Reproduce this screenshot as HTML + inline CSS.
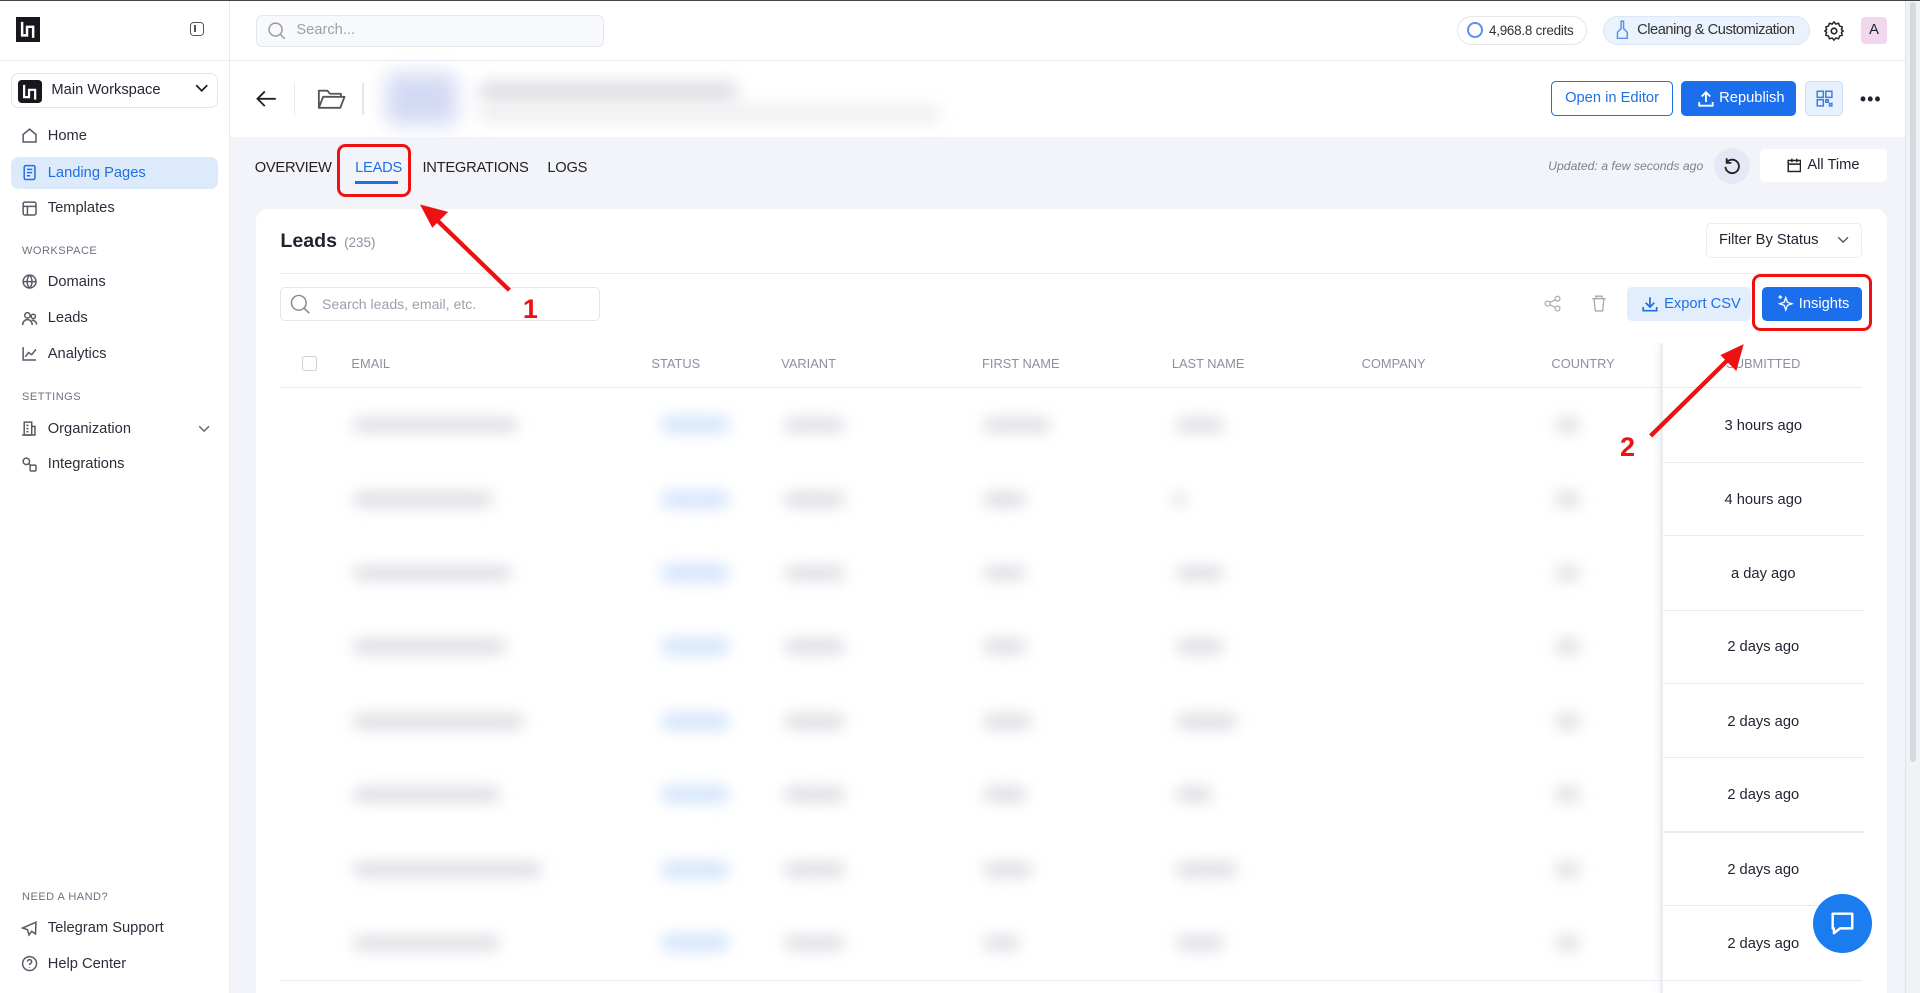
<!DOCTYPE html>
<html><head><meta charset="utf-8">
<style>
html,body{margin:0;padding:0;}
html{width:1920px;height:993px;overflow:hidden;background:#fff;}
body{zoom:1.22449;width:1568px;height:811px;position:relative;overflow:hidden;font-family:"Liberation Sans",sans-serif;color:#1f2330;background:#fff;}
.a{position:absolute;}
.nav{position:absolute;left:17px;font-size:12px;color:#2a2f3b;display:flex;align-items:center;gap:8px;}
.nav svg{width:14px;height:14px;stroke:#555b66;fill:none;stroke-width:1.4;}
.lbl{position:absolute;left:18px;font-size:9px;color:#6b7280;letter-spacing:.4px;}
.th{position:absolute;top:291px;font-size:10.5px;color:#8a90a0;}
.bl{position:absolute;height:12px;border-radius:6px;background:#dcdde2;filter:blur(6px);}
.bb{position:absolute;height:14px;border-radius:6px;background:#d3e4fb;filter:blur(6px);}
.tm{position:absolute;left:1358px;width:164px;text-align:center;font-size:12px;color:#1f2330;}
.rl{position:absolute;left:1358px;width:164px;height:1px;background:#e8eaf1;}
.tab{position:absolute;top:131px;font-size:12px;color:#222;letter-spacing:-.2px}
</style></head><body>
<div class="a" style="left:0;top:0;width:1568px;height:1px;background:#444"></div>
<div class="a" style="left:0;top:1px;width:187px;height:810px;border-right:1px solid #e8eaf2;background:#fff"></div>
<div class="a" style="left:13px;top:14px;width:20px;height:20px;background:#16181d"><svg width="20" height="20"><path d="M5 4v11h4v-7h5v9" stroke="#fff" stroke-width="2" fill="none"/></svg></div>
<div class="a" style="left:155px;top:18px;width:12px;height:11px;border:1.3px solid #555;border-radius:3px;box-sizing:border-box"><div style="position:absolute;left:3px;top:2px;width:1.3px;height:5px;background:#555"></div></div>
<div class="a" style="left:0;top:49px;width:187px;height:1px;background:#eceef4"></div>
<div class="a" style="left:9px;top:60px;width:169px;height:28px;border:1px solid #e3e5ee;border-radius:6px;box-sizing:border-box"></div>
<div class="a" style="left:15px;top:65px;width:19px;height:19px;background:#16181d;border-radius:3px"><svg width="19" height="19"><path d="M5 4v10h4v-6h5v8" stroke="#fff" stroke-width="1.8" fill="none"/></svg></div>
<div class="a" style="left:42px;top:67px;font-size:12px">Main Workspace</div>
<svg class="a" style="left:159px;top:69px" width="11" height="8"><path d="M1 1l4.5 4.5L10 1" stroke="#222" stroke-width="1.5" fill="none"/></svg>
<div class="nav" style="top:104px"><svg viewBox="0 0 16 16"><path d="M2 7l6-5 6 5v7H2z"/></svg>Home</div>
<div class="a" style="left:9px;top:128px;width:169px;height:26px;background:#ddeafb;border-radius:6px"></div>
<div class="nav" style="top:134px;color:#1f6fe5"><svg viewBox="0 0 16 16" style="stroke:#1f6fe5"><rect x="3" y="1.5" width="10" height="13" rx="1.5"/><path d="M5.5 5h5M5.5 8h5M5.5 11h3"/></svg>Landing Pages</div>
<div class="nav" style="top:163px"><svg viewBox="0 0 16 16"><rect x="2" y="2" width="12" height="12" rx="1.5"/><path d="M2 6h12M6 6v8"/></svg>Templates</div>
<div class="lbl" style="top:200px">WORKSPACE</div>
<div class="nav" style="top:223px"><svg viewBox="0 0 16 16"><circle cx="8" cy="8" r="6"/><path d="M2 8h12M8 2c3 3 3 9 0 12M8 2c-3 3-3 9 0 12"/></svg>Domains</div>
<div class="nav" style="top:253px"><svg viewBox="0 0 16 16"><circle cx="6" cy="5" r="2.5"/><circle cx="11.5" cy="6" r="2"/><path d="M1.5 14c0-3 2-5 4.5-5s4.5 2 4.5 5M10 9.5c2.5 0 4.5 1.5 4.5 4"/></svg>Leads</div>
<div class="nav" style="top:282px"><svg viewBox="0 0 16 16"><path d="M2 2v12h12M4 11l3-4 3 2 4-5"/></svg>Analytics</div>
<div class="lbl" style="top:319px">SETTINGS</div>
<div class="nav" style="top:343px"><svg viewBox="0 0 16 16"><rect x="3" y="2" width="7" height="12"/><path d="M10 6h3v8H1M5 5h2M5 8h2M5 11h2"/></svg>Organization</div>
<svg class="a" style="left:162px;top:347px" width="10" height="7"><path d="M1 1l4 4 4-4" stroke="#666" stroke-width="1.2" fill="none"/></svg>
<div class="nav" style="top:372px"><svg viewBox="0 0 16 16"><circle cx="5" cy="5" r="3"/><rect x="8.5" y="8.5" width="5.5" height="5.5" rx="1"/><path d="M7 7l2 2"/></svg>Integrations</div>
<div class="lbl" style="top:728px">NEED A HAND?</div>
<div class="nav" style="top:751px"><svg viewBox="0 0 16 16"><path d="M14 2L1.5 7.5l4.5 1.5 1.5 5 2.5-3.5 3.5 2.5z"/></svg>Telegram Support</div>
<div class="nav" style="top:780px"><svg viewBox="0 0 16 16"><circle cx="8" cy="8" r="6.5"/><path d="M6 6.3a2 2 0 114 0c0 1.3-2 1.5-2 3M8 11.5v.5"/></svg>Help Center</div>
<div class="a" style="left:188px;top:49px;width:1368px;height:1px;background:#eceef4"></div>
<div class="a" style="left:209px;top:12px;width:284px;height:26px;border:1px solid #e4e6ef;background:#f8f9fc;border-radius:5px;box-sizing:border-box"></div>
<svg class="a" style="left:218px;top:17px" width="16" height="16"><circle cx="7" cy="7" r="5.3" stroke="#999" stroke-width="1.2" fill="none"/><path d="M11 11l3.5 3.5" stroke="#999" stroke-width="1.2"/></svg>
<div class="a" style="left:242px;top:18px;font-size:12px;color:#9aa0ad">Search...</div>
<div class="a" style="left:1190px;top:13px;width:106px;height:24px;border:1px solid #e4e6ef;border-radius:12px;box-sizing:border-box"></div>
<div class="a" style="left:1198px;top:18px;width:13px;height:13px;border:2px solid #5a8ff0;border-radius:50%;box-sizing:border-box"></div>
<div class="a" style="left:1216px;top:19px;font-size:11px;color:#333;letter-spacing:-.2px">4,968.8 credits</div>
<div class="a" style="left:1309px;top:13px;width:169px;height:24px;background:#e9f2fd;border:1px solid #dbe7f8;border-radius:12px;box-sizing:border-box"></div>
<svg class="a" style="left:1319px;top:16px" width="12" height="16"><path d="M5 1h2v6l3 3v5H2v-5l3-3z" stroke="#5a8ff0" stroke-width="1.2" fill="none"/></svg>
<div class="a" style="left:1337px;top:18px;font-size:12px;color:#333;letter-spacing:-.4px">Cleaning &amp; Customization</div>
<svg class="a" style="left:1489px;top:16px" width="18" height="18" viewBox="0 0 24 24"><circle cx="12" cy="12" r="3" fill="none" stroke="#222" stroke-width="1.8"/><path d="M12 2l2 2.5 3-1 1 3 3 1-1 3L22 12l-2 1.5 1 3-3 1-1 3-3-1L12 22l-2-2.5-3 1-1-3-3-1 1-3L2 12l2-1.5-1-3 3-1 1-3 3 1z" fill="none" stroke="#222" stroke-width="1.6" stroke-linejoin="round"/></svg>
<div class="a" style="left:1520px;top:14px;width:21px;height:22px;background:#f1d8ef;border-radius:3px;font-size:12px;text-align:center;line-height:22px">A</div>
<svg class="a" style="left:208px;top:73px" width="18" height="16"><path d="M17 8H2M8 2L2 8l6 6" stroke="#222" stroke-width="1.5" fill="none"/></svg>
<div class="a" style="left:240px;top:68px;width:1px;height:26px;background:#e5e7ee"></div>
<svg class="a" style="left:259px;top:71px" width="24" height="20"><path d="M1.5 17V3h7l2 2.5h9V8M1.5 17l3.5-9h17.5l-3.5 9z" stroke="#555" stroke-width="1.5" fill="none" stroke-linejoin="round"/></svg>
<div class="a" style="left:296px;top:68px;width:1px;height:26px;background:#e5e7ee"></div>
<div class="a" style="left:315px;top:60px;width:58px;height:42px;background:#d4daf3;filter:blur(8px);border-radius:6px"></div>
<div class="a" style="left:392px;top:68px;width:210px;height:14px;background:#d8d9de;filter:blur(7px)"></div>
<div class="a" style="left:392px;top:88px;width:375px;height:10px;background:#e6e7ea;filter:blur(7px)"></div>
<div class="a" style="left:1267px;top:66px;width:99px;height:29px;border:1px solid #1f6fe5;border-radius:4px;box-sizing:border-box;font-size:12px;color:#1f6fe5;text-align:center;line-height:27px">Open in Editor</div>
<div class="a" style="left:1373px;top:66px;width:94px;height:29px;background:#1c6fec;border-radius:4px;font-size:12px;color:#fff;line-height:29px"><svg style="position:absolute;left:14px;top:8px" width="13" height="13"><path d="M6.5 9V1M3 4.5L6.5 1 10 4.5M1 9v3h11V9" stroke="#fff" stroke-width="1.5" fill="none"/></svg><span style="position:absolute;left:31px">Republish</span></div>
<div class="a" style="left:1474px;top:66px;width:31px;height:29px;background:#e7f0fd;border:1px solid #cfe0f8;border-radius:4px;box-sizing:border-box"><svg style="position:absolute;left:8px;top:7px" width="14" height="14"><path d="M1 1h5v5H1zM8 1h5v5H8zM1 8h5v5H1zM8 8h2v2H8zM11 11h2v2h-2z" stroke="#3b7de8" stroke-width="1.2" fill="none"/></svg></div>
<div class="a" style="left:1519px;top:73px;font-size:14px;font-weight:bold;letter-spacing:1px">•••</div>
<div class="a" style="left:188px;top:112px;width:1368px;height:699px;background:#f3f4f9"></div>
<div class="a" style="left:1556px;top:1px;width:12px;height:810px;background:#f1f2f5;border-left:1px solid #e2e4ea"></div>
<div class="a" style="left:1560px;top:2px;width:5px;height:620px;background:#d5d8de;border-radius:3px"></div>
<div class="tab" style="left:208px">OVERVIEW</div>
<div class="tab" style="left:290px;color:#1f6fe5">LEADS</div>
<div class="a" style="left:290px;top:148px;width:35px;height:2px;background:#1f6fe5"></div>
<div class="tab" style="left:345px">INTEGRATIONS</div>
<div class="tab" style="left:447px">LOGS</div>
<div class="a" style="left:1200px;top:130px;width:191px;text-align:right;font-size:10px;font-style:italic;color:#7b8190">Updated: a few seconds ago</div>
<div class="a" style="left:1400px;top:121px;width:29px;height:29px;background:#e6e8f5;border-radius:50%"><svg style="position:absolute;left:7px;top:7px" width="15" height="15"><path d="M3 4.5A5.5 5.5 0 1 1 2 8M3 1v3.8h3.8" stroke="#222" stroke-width="1.5" fill="none"/></svg></div>
<div class="a" style="left:1437px;top:122px;width:104px;height:27px;background:#fff;border-radius:4px"><svg style="position:absolute;left:22px;top:7px" width="12" height="12"><rect x="1" y="2" width="10" height="9" stroke="#222" stroke-width="1.2" fill="none"/><path d="M1 5h10M4 0.5v3M8 0.5v3" stroke="#222" stroke-width="1.2"/></svg><span style="position:absolute;left:39px;top:6px;font-size:12px">All Time</span></div>
<div class="a" style="left:209px;top:171px;width:1332px;height:660px;background:#fff;border-radius:10px"></div>
<div class="a" style="left:229px;top:188px;font-size:16px;font-weight:bold">Leads</div>
<div class="a" style="left:281px;top:192px;font-size:11px;color:#8a90a0">(235)</div>
<div class="a" style="left:1393px;top:182px;width:128px;height:29px;border:1px solid #eceef3;border-radius:4px;box-sizing:border-box;font-size:12px;line-height:27px;padding-left:10px">Filter By Status</div>
<svg class="a" style="left:1500px;top:193px" width="10" height="7"><path d="M1 1l4 4 4-4" stroke="#555" stroke-width="1.1" fill="none"/></svg>
<div class="a" style="left:229px;top:223px;width:1292px;height:1px;background:#eceef3"></div>
<div class="a" style="left:229px;top:234px;width:261px;height:28px;border:1px solid #e4e6ee;border-radius:4px;box-sizing:border-box"></div>
<svg class="a" style="left:236px;top:239px" width="18" height="18"><circle cx="8" cy="8" r="6" stroke="#888" stroke-width="1.2" fill="none"/><path d="M12.5 12.5l4 4" stroke="#888" stroke-width="1.2"/></svg>
<div class="a" style="left:263px;top:242px;font-size:11.5px;color:#9aa0ad">Search leads, email, etc.</div>
<svg class="a" style="left:1261px;top:241px" width="14" height="14"><circle cx="11" cy="3" r="2" stroke="#aaa" fill="none"/><circle cx="3" cy="7" r="2" stroke="#aaa" fill="none"/><circle cx="11" cy="11" r="2" stroke="#aaa" fill="none"/><path d="M5 6l4-2M5 8l4 2" stroke="#aaa"/></svg>
<svg class="a" style="left:1299px;top:241px" width="13" height="14"><path d="M1 3h11M4 3V1h5v2M2.5 3l1 10h6l1-10" stroke="#aaa" stroke-width="1.1" fill="none"/></svg>
<div class="a" style="left:1329px;top:234px;width:101px;height:28px;background:#e2eefc;border-radius:4px;font-size:12px;color:#1f6fe5;line-height:28px"><svg style="position:absolute;left:12px;top:8px" width="13" height="13"><path d="M6.5 1v8M3 5.5L6.5 9 10 5.5M1 9v3h11V9" stroke="#1f6fe5" stroke-width="1.4" fill="none"/></svg><span style="position:absolute;left:30px">Export CSV</span></div>
<div class="a" style="left:1439px;top:234px;width:82px;height:28px;background:#1c6fec;border-radius:4px;font-size:12px;color:#fff;line-height:28px"><svg style="position:absolute;left:11px;top:6px" width="15" height="15"><path d="M8 3l1.3 3.7L13 8l-3.7 1.3L8 13l-1.3-3.7L3 8l3.7-1.3zM3.5 1v3M2 2.5h3" stroke="#fff" stroke-width="1.1" fill="none"/></svg><span style="position:absolute;left:30px">Insights</span></div>
<div class="a" style="left:247px;top:291px;width:12px;height:12px;border:1px solid #cfd2da;border-radius:2px;box-sizing:border-box"></div>
<div class="th" style="left:287px">EMAIL</div>
<div class="th" style="left:532px">STATUS</div>
<div class="th" style="left:638px">VARIANT</div>
<div class="th" style="left:802px">FIRST NAME</div>
<div class="th" style="left:957px">LAST NAME</div>
<div class="th" style="left:1112px">COMPANY</div>
<div class="th" style="left:1267px">COUNTRY</div>
<div class="th" style="left:1358px;width:164px;text-align:center">SUBMITTED</div>
<div class="a" style="left:229px;top:316px;width:1292px;height:1px;background:#e8eaf1"></div>
<div class="a" style="left:1356px;top:280px;width:2px;height:531px;background:#eceef2;box-shadow:-2px 0 4px rgba(0,0,0,.06)"></div>
<div class="bl" style="left:288px;top:341px;width:135px"></div><div class="bb" style="left:540px;top:340px;width:55px"></div><div class="bl" style="left:640px;top:341px;width:50px"></div><div class="bl" style="left:803px;top:341px;width:55px"></div><div class="bl" style="left:960px;top:341px;width:40px"></div><div class="bl" style="left:1270px;top:341px;width:20px"></div>
<div class="bl" style="left:288px;top:402px;width:115px"></div><div class="bb" style="left:540px;top:401px;width:55px"></div><div class="bl" style="left:640px;top:402px;width:50px"></div><div class="bl" style="left:803px;top:402px;width:35px"></div><div class="bl" style="left:958px;top:402px;width:10px"></div><div class="bl" style="left:1270px;top:402px;width:20px"></div>
<div class="bl" style="left:288px;top:462px;width:130px"></div><div class="bb" style="left:540px;top:461px;width:55px"></div><div class="bl" style="left:640px;top:462px;width:50px"></div><div class="bl" style="left:803px;top:462px;width:35px"></div><div class="bl" style="left:960px;top:462px;width:40px"></div><div class="bl" style="left:1270px;top:462px;width:20px"></div>
<div class="bl" style="left:288px;top:522px;width:125px"></div><div class="bb" style="left:540px;top:521px;width:55px"></div><div class="bl" style="left:640px;top:522px;width:50px"></div><div class="bl" style="left:803px;top:522px;width:35px"></div><div class="bl" style="left:960px;top:522px;width:40px"></div><div class="bl" style="left:1270px;top:522px;width:20px"></div>
<div class="bl" style="left:288px;top:583px;width:140px"></div><div class="bb" style="left:540px;top:582px;width:55px"></div><div class="bl" style="left:640px;top:583px;width:50px"></div><div class="bl" style="left:803px;top:583px;width:40px"></div><div class="bl" style="left:960px;top:583px;width:50px"></div><div class="bl" style="left:1270px;top:583px;width:20px"></div>
<div class="bl" style="left:288px;top:643px;width:120px"></div><div class="bb" style="left:540px;top:642px;width:55px"></div><div class="bl" style="left:640px;top:643px;width:50px"></div><div class="bl" style="left:803px;top:643px;width:35px"></div><div class="bl" style="left:960px;top:643px;width:30px"></div><div class="bl" style="left:1270px;top:643px;width:20px"></div>
<div class="bl" style="left:288px;top:704px;width:155px"></div><div class="bb" style="left:540px;top:703px;width:55px"></div><div class="bl" style="left:640px;top:704px;width:50px"></div><div class="bl" style="left:803px;top:704px;width:40px"></div><div class="bl" style="left:960px;top:704px;width:50px"></div><div class="bl" style="left:1270px;top:704px;width:20px"></div>
<div class="bl" style="left:288px;top:764px;width:120px"></div><div class="bb" style="left:540px;top:763px;width:55px"></div><div class="bl" style="left:640px;top:764px;width:50px"></div><div class="bl" style="left:803px;top:764px;width:30px"></div><div class="bl" style="left:960px;top:764px;width:40px"></div><div class="bl" style="left:1270px;top:764px;width:20px"></div>
<div class="tm" style="top:341px">3 hours ago</div><div class="rl" style="top:377px"></div>
<div class="tm" style="top:402px">4 hours ago</div><div class="rl" style="top:437px"></div>
<div class="tm" style="top:462px">a day ago</div><div class="rl" style="top:498px"></div>
<div class="tm" style="top:522px">2 days ago</div><div class="rl" style="top:558px"></div>
<div class="tm" style="top:583px">2 days ago</div><div class="rl" style="top:618px"></div>
<div class="tm" style="top:643px">2 days ago</div><div class="rl" style="top:679px"></div>
<div class="tm" style="top:704px">2 days ago</div><div class="rl" style="top:739px"></div>
<div class="tm" style="top:764px">2 days ago</div><div class="a" style="left:229px;top:800px;width:1292px;height:1px;background:#e8eaf1"></div>
<div class="a" style="left:1481px;top:730px;width:48px;height:48px;background:#1b7cf0;border-radius:50%"><svg style="position:absolute;left:13px;top:13px" width="22" height="22"><path d="M3 3h16v12H9l-5 4v-4H3z" stroke="#fff" stroke-width="2" fill="none" stroke-linejoin="round"/></svg></div>
<div class="a" style="left:275px;top:118px;width:61px;height:43px;border:3px solid #ee1111;border-radius:7px;box-sizing:border-box"></div>
<div class="a" style="left:1431px;top:224px;width:98px;height:46px;border:3px solid #ee1111;border-radius:7px;box-sizing:border-box"></div>
<svg class="a" style="left:0;top:0" width="1568" height="811">
<path d="M416 237L355 178" stroke="#ee1111" stroke-width="3.5"/>
<path d="M343 167l23 6-13 13z" fill="#ee1111"/>
<path d="M1348 356L1412 293" stroke="#ee1111" stroke-width="3.5"/>
<path d="M1424 281l-6 22-13-13z" fill="#ee1111"/>
</svg>
<div class="a" style="left:427px;top:240px;font-size:22px;font-weight:bold;color:#ee1111">1</div>
<div class="a" style="left:1323px;top:353px;font-size:22px;font-weight:bold;color:#ee1111">2</div>
</body></html>
